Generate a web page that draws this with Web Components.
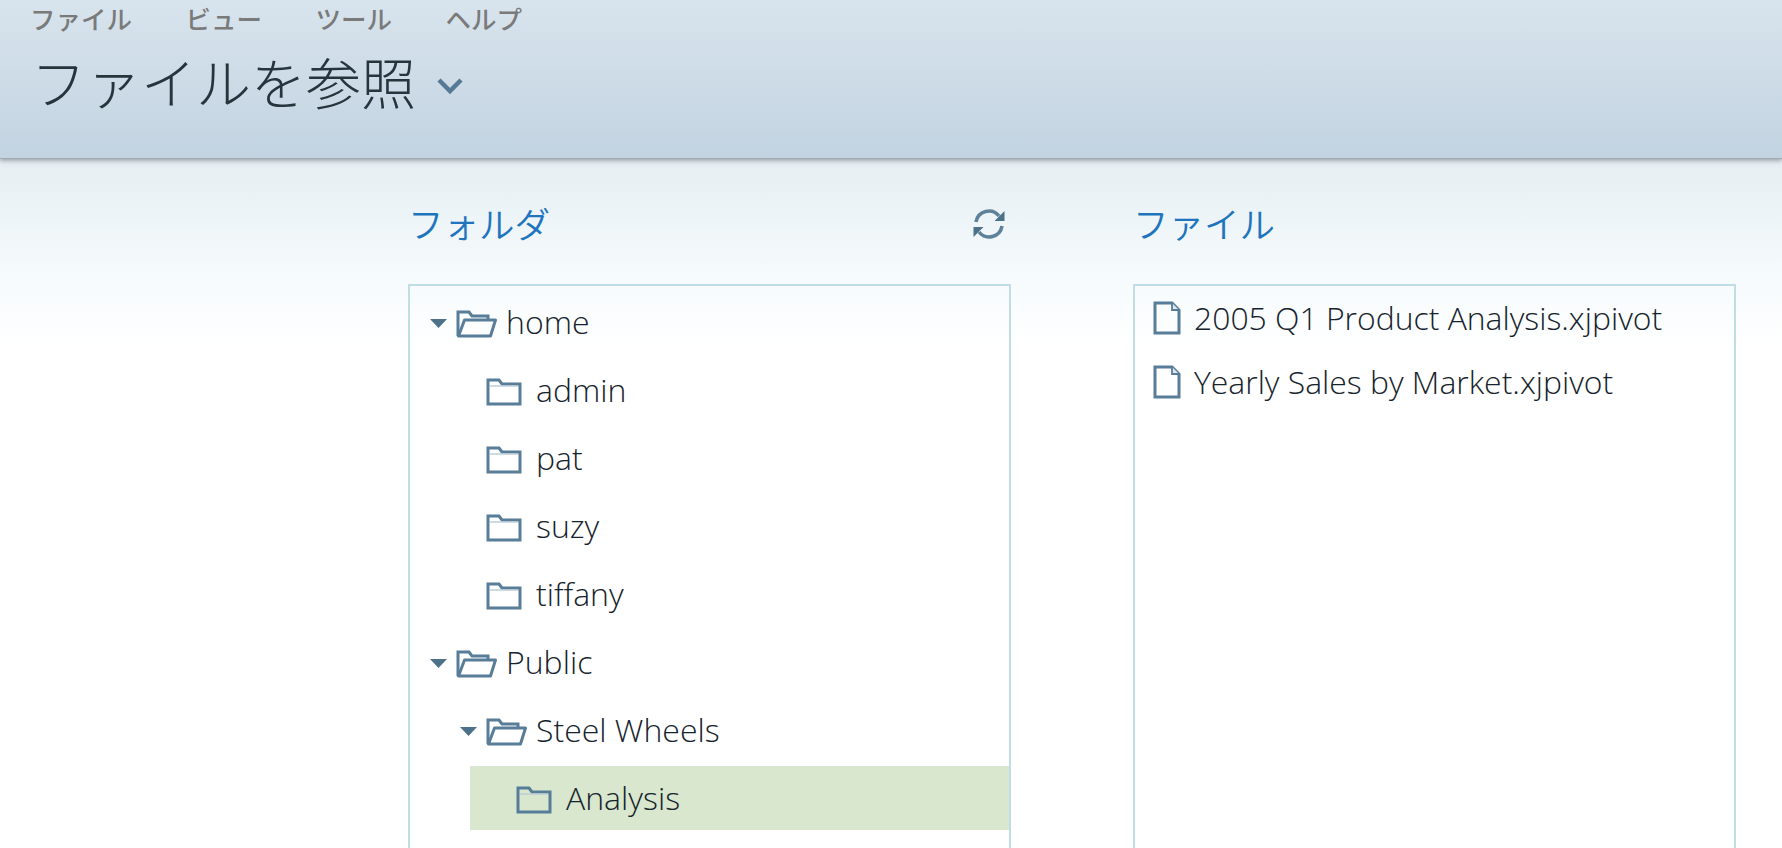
<!DOCTYPE html>
<html lang="ja"><head><meta charset="utf-8"><title>ファイルを参照</title>
<style>
html,body{margin:0;height:100%;overflow:hidden}
body{font-family:"Open Sans","Noto Sans CJK JP",sans-serif;background:linear-gradient(#e5eef2 158px,#f5fafc 270px,#fff 350px);display:flex;flex-direction:column}
</style></head><body>
<app-header>
  <menu-item slot="menu">ファイル</menu-item><menu-item slot="menu">ビュー</menu-item><menu-item slot="menu">ツール</menu-item><menu-item slot="menu">ヘルプ</menu-item>
  <span slot="title">ファイルを参照</span>
</app-header>
<browse-layout>
  <browse-panel heading="フォルダ" refresh>
    <tree-node label="home" open>
      <tree-node label="admin"></tree-node>
      <tree-node label="pat"></tree-node>
      <tree-node label="suzy"></tree-node>
      <tree-node label="tiffany"></tree-node>
    </tree-node>
    <tree-node label="Public" open>
      <tree-node label="Steel Wheels" open>
        <tree-node label="Analysis" selected></tree-node>
      </tree-node>
    </tree-node>
  </browse-panel>
  <browse-panel heading="ファイル" files>
    <file-row>2005 Q1 Product Analysis.xjpivot</file-row>
    <file-row>Yearly Sales by Market.xjpivot</file-row>
  </browse-panel>
</browse-layout>
<script>
const I='#587d99';
const folderClosed=`<svg width="36" height="28" viewBox="0 0 36 28"><path d="M2 4V2h11l3 4h18v20H2z" fill="none" stroke="${I}" stroke-width="3"/><path d="M4 8h28" stroke="#b9cbd6" stroke-width="1.400"/></svg>`;
const folderOpen=`<svg width="41" height="28" viewBox="0 0 41 28"><path d="M2 26V2h11l3 4h16v4" fill="none" stroke="${I}" stroke-width="3"/><path d="M8.500 10H39.500L34.500 26H2.500z" fill="none" stroke="${I}" stroke-width="3" stroke-linejoin="round"/></svg>`;
const fileIcon=`<svg width="28" height="34" viewBox="0 0 28 34"><path d="M2 2H19L26 9V32H2z" fill="none" stroke="${I}" stroke-width="3"/><path d="M19 2V9H26" fill="#dfe8ee" stroke="${I}" stroke-width="1.800"/></svg>`;
const refreshIcon=`<svg width="34" height="32" viewBox="0 0 34 32"><g fill="none" stroke="#5f8199" stroke-width="3.600"><path d="M4 14A13 13 0 0 1 27 8"/><path d="M30 18A13 13 0 0 1 7 24"/></g><path d="M32.500 3V13H22.500z" fill="#4d7189"/><path d="M1.500 29V19H11.500z" fill="#4d7189"/></svg>`;

class AppHeader extends HTMLElement{constructor(){super();this.attachShadow({mode:'open'}).innerHTML=`<style>
:host{display:block;flex:none;height:158px;box-sizing:border-box;background:linear-gradient(#d8e4ed,#c2d3e1);box-shadow:0 1px 0 #a3aab0,0 3px 4px rgba(90,100,110,.5);position:relative;font-family:"Noto Sans CJK JP",sans-serif}
nav{display:flex;gap:53.500px;padding-left:30px;height:36px;align-items:center}
.t{display:flex;align-items:center;padding-left:31px;height:72px;margin-top:8px;font-size:55px;font-weight:300;color:#26343c;line-height:1}
svg{margin-left:20px;margin-top:12px}
</style><nav><slot name="menu"></slot></nav><div class="t"><slot name="title"></slot><svg width="28" height="18" viewBox="0 0 28 18"><path d="M3 3L14 14L25 3" fill="none" stroke="#567a95" stroke-width="4.500"/></svg></div>`}}
class MenuItem extends HTMLElement{constructor(){super();this.attachShadow({mode:'open'}).innerHTML=`<style>:host{display:block;font-size:25.500px;font-weight:500;color:#7a7a7a;line-height:1}</style><slot></slot>`}}
class BrowseLayout extends HTMLElement{constructor(){super();this.attachShadow({mode:'open'}).innerHTML=`<style>:host{display:grid;flex:1;min-height:0;grid-template-columns:603px 603px;column-gap:122px;padding-left:408px}</style><slot></slot>`}}
class BrowsePanel extends HTMLElement{constructor(){super();const f=this.hasAttribute('files');this.attachShadow({mode:'open'}).innerHTML=`<style>
:host{display:flex;flex-direction:column;min-height:0}
header{height:126px;box-sizing:border-box;display:flex;justify-content:space-between;align-items:center;padding:2px 5px 0 0;font:350 35.500px "Noto Sans CJK JP",sans-serif;color:#1f75bd}
svg{margin-top:4px}
.box{flex:1;border:2px solid #c0dde6;border-bottom:0;padding-top:${f?1:4}px;min-height:0;overflow:hidden}
</style><header><span>${this.getAttribute('heading')}</span>${this.hasAttribute('refresh')?refreshIcon:''}</header><div class="box"><slot></slot></div>`}}
class TreeNode extends HTMLElement{constructor(){super();const o=this.hasAttribute('open'),s=this.hasAttribute('selected');this.attachShadow({mode:'open'}).innerHTML=`<style>
:host{display:block}
.r{display:flex;align-items:center;height:64px;margin-bottom:4px;padding-left:20px;background:${s?'#d8e7cd':'transparent'};font-size:32px;font-weight:300;color:#16232c;white-space:nowrap}
.c{width:26px;flex:none;display:flex;padding-top:2px}
.i{width:50px;flex:none;display:flex;padding-top:4px}
.l{padding-bottom:2px}
.k{padding-left:30px}
</style><div class="r"><span class="c">${o?`<svg width="18" height="10" viewBox="0 0 18 10"><path d="M0 1H17L8.500 10z" fill="#4d7189"/></svg>`:''}</span><span class="i">${o?folderOpen:folderClosed}</span><span class="l">${this.getAttribute('label')}</span></div><div class="k"><slot></slot></div>`}}
class FileRow extends HTMLElement{constructor(){super();this.attachShadow({mode:'open'}).innerHTML=`<style>
:host{display:flex;align-items:center;height:60px;margin-bottom:4px;padding-left:18px;font-size:31.900px;font-weight:300;color:#16232c;white-space:nowrap}
.i{width:41px;flex:none;display:flex;padding-top:2px}
</style><span class="i">${fileIcon}</span><slot></slot>`}}
[['app-header',AppHeader],['menu-item',MenuItem],['browse-layout',BrowseLayout],['browse-panel',BrowsePanel],['tree-node',TreeNode],['file-row',FileRow]].forEach(([n,c])=>customElements.define(n,c));
</script>
</body></html>
